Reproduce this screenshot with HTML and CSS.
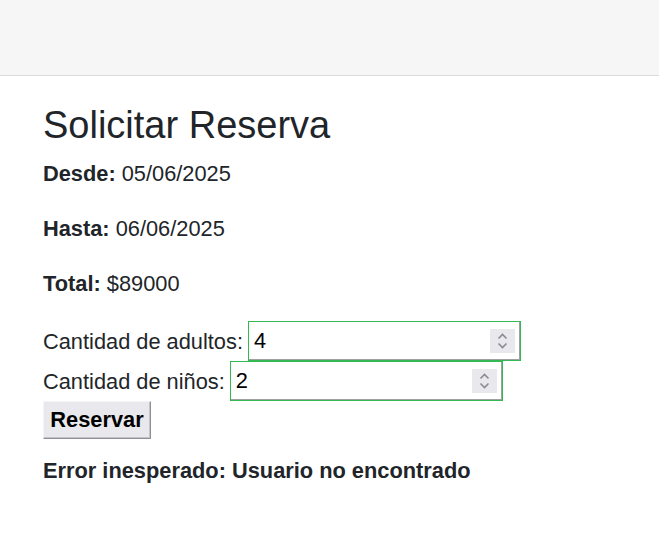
FILE: index.html
```html
<!DOCTYPE html>
<html lang="es">
<head>
<meta charset="utf-8">
<title>Solicitar Reserva</title>
<link rel="stylesheet" href="styles.css">
</head>
<body>
<header class="topbar"></header>
<main class="content">
  <h1 class="title">Solicitar Reserva</h1>
  <p class="info"><strong>Desde:</strong> 05/06/2025</p>
  <p class="info"><strong>Hasta:</strong> 06/06/2025</p>
  <p class="info info-last"><strong>Total:</strong> $89000</p>
  <form class="form">
    <div class="row">
      <label class="label" for="adultos">Cantidad de adultos:</label>
      <span class="field">
        <input class="num" id="adultos" type="number" value="4">
        <span class="spin"><svg width="25" height="24" viewBox="0 0 25 24"><path d="M8.5 9.5 L12.5 5.5 L16.5 9.5" fill="none" stroke="#8a8a92" stroke-width="1.6"/><path d="M8.5 14.5 L12.5 18.5 L16.5 14.5" fill="none" stroke="#8a8a92" stroke-width="1.6"/></svg></span>
      </span>
    </div>
    <div class="row">
      <label class="label" for="ninos">Cantidad de niños:</label>
      <span class="field">
        <input class="num" id="ninos" type="number" value="2">
        <span class="spin"><svg width="25" height="24" viewBox="0 0 25 24"><path d="M8.5 9.5 L12.5 5.5 L16.5 9.5" fill="none" stroke="#8a8a92" stroke-width="1.6"/><path d="M8.5 14.5 L12.5 18.5 L16.5 14.5" fill="none" stroke="#8a8a92" stroke-width="1.6"/></svg></span>
      </span>
    </div>
    <button class="btn" type="button">Reservar</button>
  </form>
  <p class="error">Error inesperado: Usuario no encontrado</p>
</main>
</body>
</html>
```
FILE: styles.css
```css
* { box-sizing: border-box; }
html, body {
  margin: 0;
  padding: 0;
  background: #fff;
}
body {
  font-family: "Liberation Sans", Arial, sans-serif;
  font-size: 21.8px;
  line-height: 1.15;
  color: #212529;
}
.topbar {
  height: 76px;
  background: #f6f6f6;
  border-bottom: 1px solid #dcdcdc;
}
.content {
  padding: 0 43px;
}
.title {
  margin: 27px 0 14px;
  font-size: 38px;
  font-weight: 400;
  line-height: 44px;
}
.info {
  margin: 0 0 30px;
  line-height: 25px;
}
.info-last { margin-bottom: 25px; }
.form {
  display: flex;
  flex-direction: column;
  align-items: flex-start;
}
.row {
  display: flex;
  align-items: center;
  gap: 5px;
  height: 40px;
}
.label { line-height: 25px; }
.field {
  position: relative;
  display: block;
}
.num {
  display: block;
  width: 273px;
  height: 40px;
  margin: 0;
  padding: 0 30px 0 5px;
  border: 1px solid #34b853;
  box-shadow: inset -1px -1px 0 #a0a0a0;
  background: #fff;
  font-family: "Liberation Sans", Arial, sans-serif;
  font-size: 21.8px;
  color: #000;
  outline: none;
  -moz-appearance: textfield;
}
.num::-webkit-inner-spin-button,
.num::-webkit-outer-spin-button {
  -webkit-appearance: none;
  margin: 0;
}
.spin {
  position: absolute;
  right: 6px;
  top: 8px;
  width: 25px;
  height: 24px;
  background: #e9e9ed;
  display: block;
}
.spin svg { display: block; }
.btn {
  margin: 0;
  width: 108px;
  height: 38px;
  padding: 0;
  font-family: "Liberation Sans", Arial, sans-serif;
  font-size: 21.8px;
  font-weight: 700;
  color: #000;
  background: #e9e9ed;
  border: 1px solid;
  border-color: #f4f4f6 #8f8f95 #8f8f95 #f4f4f6;
  box-shadow: inset -1px -1px 0 #c4c4c8;
  border-radius: 0;
}
.error {
  margin: 19px 0 0;
  font-weight: 700;
  line-height: 25px;
}
```
